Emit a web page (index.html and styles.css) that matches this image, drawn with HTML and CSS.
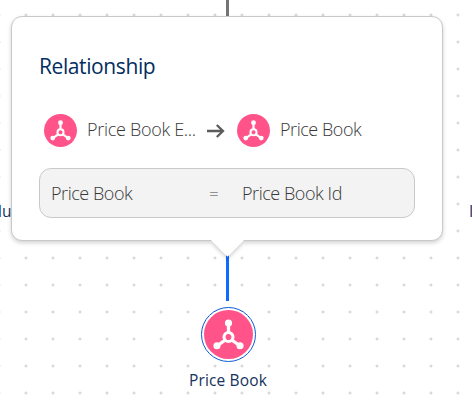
FILE: index.html
```html
<!DOCTYPE html>
<html lang="en">
<head>
<meta charset="utf-8">
<title>Relationship</title>
<link rel="stylesheet" href="styles.css">
</head>
<body>
<svg class="defs" width="0" height="0" aria-hidden="true">
  <symbol id="hub" viewBox="-24 -24 48 48">
    <circle r="24" fill="#ff538a"/>
    <path d="M0 3V-11M0 3L-11 11M0 3L11 11" stroke="#fff" stroke-width="3.200"/>
    <circle cy="-11.300" r="3.500" fill="#fff"/>
    <circle cx="-11.300" cy="11" r="3.500" fill="#fff"/>
    <circle cx="11.300" cy="11" r="3.500" fill="#fff"/>
    <circle cy="2.500" r="4.400" fill="#ff538a" stroke="#fff" stroke-width="3"/>
  </symbol>
</svg>
<main class="canvas">
  <span class="edge edge-top"></span>
  <span class="edge edge-selected"></span>
  <span class="label neighbor-left">lu</span>
  <span class="label neighbor-right">I</span>

  <div class="node">
    <div class="ring"><svg width="49" height="49"><use href="#hub"/></svg></div>
    <span class="label">Price Book</span>
  </div>

  <section class="popover">
    <h2>Relationship</h2>
    <div class="objects">
      <svg class="icon" width="33" height="33"><use href="#hub"/></svg>
      <span class="name source">Price Book E...</span>
      <svg class="arrow" width="20" height="16" viewBox="0 0 20 16"><path d="M1 8H17M10.800 2L17 8L10.800 14" fill="none" stroke="#5c5c5c" stroke-width="2.300"/></svg>
      <svg class="icon" width="33" height="33"><use href="#hub"/></svg>
      <span class="name">Price Book</span>
    </div>
    <div class="criteria">
      <span class="name field">Price Book</span>
      <span class="operator">=</span>
      <span class="name">Price Book Id</span>
    </div>
    <span class="pointer"></span>
  </section>
</main>
</body>
</html>
```
FILE: styles.css
```css
* { box-sizing: border-box; }
body { margin: 0; }
.defs { position: absolute; }
svg { display: block; flex: none; }

.canvas {
  position: relative;
  width: 472px;
  height: 408px;
  overflow: hidden;
  background: radial-gradient(circle at 14px 14px, #d9d9d9 0.8px, rgba(221, 221, 221, 0) 2px) 12px 1px / 27px 27px #fff;
  font-family: "Open Sans", "Noto Sans", sans-serif;
}

.edge { position: absolute; left: 226px; width: 3px; }
.edge-top { top: 0; height: 18px; background: #747474; }
.edge-selected { top: 250px; height: 51px; background: #0f6bff; }

.label {
  font-size: 15.500px;
  line-height: 20px;
  letter-spacing: 0.150px;
  color: #16325c;
  white-space: nowrap;
}
.neighbor-left { position: absolute; left: -2px; top: 201px; }
.neighbor-right { position: absolute; left: 469px; top: 201px; }

.node {
  position: absolute;
  left: 168px;
  top: 307px;
  width: 120px;
  display: flex;
  flex-direction: column;
  align-items: center;
  gap: 8px;
}
.ring {
  display: grid;
  place-items: center;
  width: 55px;
  height: 55px;
  border: 1.500px solid #0b5cd5;
  border-radius: 50%;
  background: #fff;
}

.popover {
  position: absolute;
  left: 11px;
  top: 16px;
  width: 432px;
  height: 225px;
  padding: 33px 27px 22px;
  border: 1px solid #c9c9c9;
  border-radius: 11px;
  background: #fff;
  box-shadow: 0 2px 4px rgba(0, 0, 0, 0.18);
}
h2 {
  margin: 0;
  font-size: 21px;
  font-weight: 400;
  line-height: 32px;
  letter-spacing: -0.400px;
  color: #032d60;
}
.objects {
  display: flex;
  align-items: center;
  height: 34px;
  margin: 31px 0 21px;
  padding-left: 5px;
}
.name {
  font-size: 18px;
  font-weight: 300;
  line-height: 24px;
  letter-spacing: -0.450px;
  color: #383838;
  white-space: nowrap;
}
.objects .name { margin: -2px 0 0 10px; }
.objects .source { width: 119px; letter-spacing: -0.300px; }
.arrow { margin: 2px 11px 0 0; }
.criteria {
  display: flex;
  align-items: center;
  width: 376px;
  height: 50px;
  padding-left: 11px;
  border: 1px solid #c9c9c9;
  border-radius: 12px;
  background: #f3f3f3;
}
.field { width: 158px; }
.operator { width: 33px; font-size: 17px; font-weight: 300; color: #444; }
.pointer {
  position: absolute;
  left: 204px;
  top: 212px;
  width: 23px;
  height: 23px;
  transform: rotate(45deg);
  background: #fff;
  box-shadow: 3px 3px 4px -1px rgba(0, 0, 0, 0.16);
}
```
